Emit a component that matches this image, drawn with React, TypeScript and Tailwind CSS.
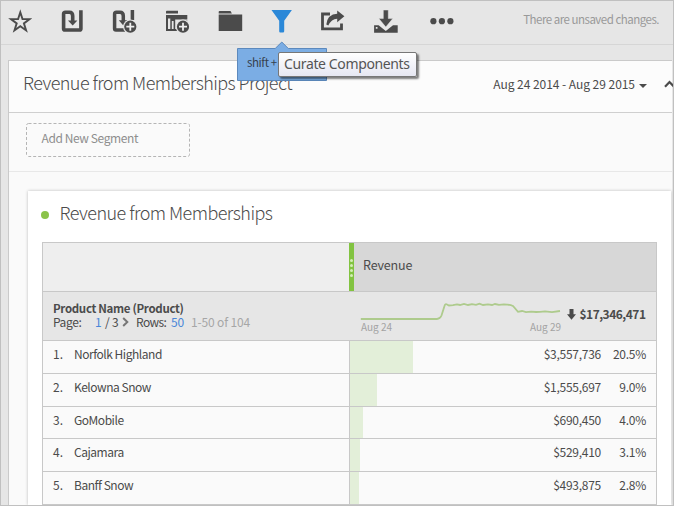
import React from "react";

const INK = "#4b4b4b";

function Star() {
  return (
    <svg width="24" height="24" viewBox="8 9 24 24" className="absolute left-[7px] top-2">
      <path d="M20.3 12.3 L22.5 19.1 H29.6 L23.9 23.4 L26.1 30.4 L20.3 26.2 L14.5 30.4 L16.7 23.4 L11 19.1 H18.1 Z" fill="none" stroke={INK} strokeWidth="1.9" />
    </svg>
  );
}

function SaveIcon() {
  return (
    <svg width="24" height="24" viewBox="61 9 24 24" className="absolute left-[60px] top-2">
      <path d="M80.9 10.2 V28.7 Q80.9 30 79.6 30 H65 Q63.6 30 63.6 28.7 V14 Q63.6 12.2 65.4 12.2 H69.5 Q72.7 12.2 72.7 16 V21" fill="none" stroke={INK} strokeWidth="3.6" />
      <path d="M68 20.5 H77.4 L72.7 25.6 Z" fill={INK} />
    </svg>
  );
}

function PlusBadge({ cx }: { cx: number }) {
  return (
    <g>
      <circle cx={cx} cy="26.7" r="7.2" fill="#e6e6e6" />
      <circle cx={cx} cy="26.7" r="6.1" fill={INK} />
      <path d={`M${cx - 4} 26.7 H${cx + 4} M${cx} 22.7 V30.7`} stroke="#efefef" strokeWidth="1.8" />
    </g>
  );
}

function SaveAsIcon() {
  return (
    <svg width="28" height="26" viewBox="112 9 28 26" className="absolute left-[111px] top-2">
      <path d="M132.4 10 V20 M125 30 H116 Q114.6 30 114.6 28.7 V14 Q114.6 12.2 116.4 12.2 H120 Q123.3 12.2 123.3 16 V21" fill="none" stroke={INK} strokeWidth="3.5" />
      <path d="M118.8 20.3 H127.8 L123.3 25.4 Z" fill={INK} />
      <PlusBadge cx={130.3} />
    </svg>
  );
}

function ReportIcon() {
  return (
    <svg width="28" height="26" viewBox="164 9 28 26" className="absolute left-[163px] top-2">
      <path d="M166 13.6 V11.6 Q166 10.8 166.8 10.8 H178 V13.6 Z" fill={INK} />
      <path fillRule="evenodd" d="M166 15 H187.3 V31 H166 Z M168 18.5 V29 H170.3 V18.5 Z M171.8 21 V29 H173.6 V21 Z M175.2 23.6 V29 H180 V20.5 H187.3 V19.6 H175.2 Z" fill={INK} />
      <PlusBadge cx={183} />
    </svg>
  );
}

function FolderIcon() {
  return (
    <svg width="26" height="24" viewBox="217 9 26 24" className="absolute left-[216px] top-2">
      <path d="M218.7 13.4 V11.8 Q218.7 10.9 219.6 10.9 H230.5 L231.9 13.4 Z M218.7 14.6 H242.2 V31 H218.7 Z" fill={INK} />
    </svg>
  );
}

function FunnelIcon() {
  return (
    <svg width="22" height="25" viewBox="271 9 22 25" className="absolute left-[270px] top-2">
      <path d="M271.5 10 H291.9 L284.2 20.8 V31.2 Q284.2 32.6 283 32.6 H280.3 Q279.2 32.6 279.2 31.2 V20.8 Z" fill="#2b88d8" />
    </svg>
  );
}

function ShareIcon() {
  return (
    <svg width="26" height="24" viewBox="320 9 26 24" className="absolute left-[319px] top-2">
      <path d="M330 14 H322.5 V28.9 H341.5 V23.5" fill="none" stroke={INK} strokeWidth="2.8" />
      <path d="M337.2 10.5 L344.4 16.2 L337.2 22.2 V18.7 Q331.4 18.7 328.3 25.6 L326.3 24.5 Q327.5 14.2 337.2 13.8 Z" fill={INK} />
    </svg>
  );
}

function DownloadIcon() {
  return (
    <svg width="26" height="25" viewBox="373 9 26 25" className="absolute left-[372px] top-2">
      <path d="M374.1 25.2 H378.6 L385.8 31 L393 25.2 H397.7 V32.7 H374.1 Z M375.8 27 V28.7 H377.5 V27 Z" fill={INK} fillRule="evenodd" />
      <path d="M383.3 10 H388.3 V18.6 H392.8 L385.8 27 L378.8 18.6 H383.3 Z" fill={INK} stroke="#e6e6e6" strokeWidth="0.5" />
    </svg>
  );
}

function MoreIcon() {
  return (
    <svg width="26" height="10" viewBox="429 16 26 10" className="absolute left-[428px] top-[15px]">
      <circle cx="433.4" cy="21.2" r="3.1" fill={INK} />
      <circle cx="441.9" cy="21.2" r="3.1" fill={INK} />
      <circle cx="450.4" cy="21.2" r="3.1" fill={INK} />
    </svg>
  );
}

const rows = [
  { n: "1.", name: "Norfolk Highland", value: "$3,557,736", pct: "20.5%", bar: 63, h: 33 },
  { n: "2.", name: "Kelowna Snow", value: "$1,555,697", pct: "9.0%", bar: 27, h: 33 },
  { n: "3.", name: "GoMobile", value: "$690,450", pct: "4.0%", bar: 13, h: 32 },
  { n: "4.", name: "Cajamara", value: "$529,410", pct: "3.1%", bar: 10, h: 33 },
  { n: "5.", name: "Banff Snow", value: "$493,875", pct: "2.8%", bar: 9, h: 33 },
];

export default function App() {
  return (
    <div className="relative flex h-[506px] w-[674px] flex-col overflow-hidden border border-[#c0c0c0] bg-[#e6e6e6] font-['Noto_Sans_CJK_SC','Noto_Sans',sans-serif] text-[12px] text-[#4b4b4b]">
      <header className="relative flex h-11 shrink-0 justify-end border-b border-[#d6d6d6]">
        <Star />
        <SaveIcon />
        <SaveAsIcon />
        <ReportIcon />
        <FolderIcon />
        <FunnelIcon />
        <ShareIcon />
        <DownloadIcon />
        <MoreIcon />
        <span className="mr-[14px] mt-[9px] whitespace-nowrap text-[11.5px] leading-[18px] tracking-[-0.5px] text-[#999]">There are unsaved changes.</span>
      </header>

      <main className="ml-[7px] mr-[1px] mt-[15px] flex min-h-0 flex-1 flex-col border-l border-t border-[#cacaca] bg-[#fafafa]">
        <div className="flex h-[52px] shrink-0 items-start border-b border-[#cfcfcf] bg-[#fcfcfc]">
          <h1 className="ml-[14px] mt-[8px] whitespace-nowrap text-[18px] font-light leading-[26px] tracking-[-0.58px]">Revenue from Memberships Project</h1>
          <div className="-mr-[2px] ml-auto mt-[14px] flex items-start">
            <span className="whitespace-nowrap text-[12px] leading-[18px] tracking-[-0.04px]">Aug 24 2014 - Aug 29 2015</span>
            <svg width="8" height="4" className="ml-1 mt-[9px]"><path d="M0 0 H8 L4 4 Z" fill={INK} /></svg>
            <svg width="10" height="8" className="ml-[17px] mt-[5px]"><path d="M1 6.7 L5.5 2 L10 6.7" stroke={INK} strokeWidth="2.2" fill="none" /></svg>
          </div>
        </div>

        <div className="h-[59px] shrink-0 border-b border-[#e8e8e8] pl-[17px] pt-[10px]">
          <svg width="164" height="34" className="absolute"><rect x="0.5" y="0.5" width="163" height="33" rx="2" fill="none" stroke="#b5b5b5" strokeDasharray="3 2" /></svg>
          <div className="pl-[15.5px] pt-[6px] text-[12px] leading-[18px] tracking-[-0.4px] text-[#8e8e8e]">Add New Segment</div>
        </div>

        <section className="ml-[19px] mr-[1px] mt-[19px] flex min-h-0 flex-1 flex-col bg-white shadow-[0_0_3px_rgba(0,0,0,0.25)]">
          <div className="flex h-[51px] shrink-0 items-start">
            <i className="ml-[13px] mt-[20px] h-2 w-2 rounded-full bg-[#8bc34a]" />
            <h2 className="ml-[10.5px] mt-[8px] whitespace-nowrap text-[18px] font-light leading-[26px] tracking-[-0.55px]">Revenue from Memberships</h2>
          </div>

          <div className="ml-[14px] w-[615px] shrink-0 border-x border-t border-[#c8c8c8]">
            <div className="flex h-[49px] border-b border-[#c8c8c8]">
              <div className="w-[306px] bg-[#eeeeee]" />
              <div className="flex w-[5px] flex-col items-center gap-[2px] bg-[#82c341] pt-[16px]">
                {[0, 1, 2, 3].map((i) => (
                  <i key={i} className="h-[3px] w-[3px] rounded-full bg-[#d3edb4]" />
                ))}
              </div>
              <div className="flex-1 bg-[#d7d7d7] pl-[9px] pt-[13px] text-[12.5px] leading-[18px] tracking-[-0.15px]">Revenue</div>
            </div>

            <div className="flex h-[49px] border-b border-[#c8c8c8] bg-[#e6e6e6]">
              <div className="w-[317px] pl-[10px] pt-[9px]">
                <div className="whitespace-nowrap text-[11.5px] font-bold leading-[14px] tracking-[-0.32px]">Product Name (Product)</div>
                <div className="flex items-start whitespace-nowrap text-[12px] leading-[14px] tracking-[-0.15px]">
                  <span className="w-[42px] tracking-[-0.4px]">Page:</span>
                  <span className="w-[10px] text-[#4a86d8]">1</span>
                  <span className="w-[17px]">/ 3</span>
                  <svg width="7" height="10" className="mt-[2px]"><path d="M1.2 1 L5.3 5 L1.2 9" fill="none" stroke="#777" strokeWidth="2" /></svg>
                  <span className="ml-[7px] w-[35px] tracking-[-0.6px]">Rows:</span>
                  <span className="w-[20px] text-[#4a86d8]">50</span>
                  <span className="text-[#a6a6a6]">1-50 of 104</span>
                </div>
              </div>
              <div className="w-[201px] pt-[9px]">
                <svg width="201" height="20" viewBox="360 301 201 20" className="block">
                  <path d="M360.8 319 H437 Q440 319 441.5 315.5 L444.5 306 Q445.2 303.7 446.5 304.3 L449 305.5 L453 305.2 L457 304.4 L460 305 L464 303.9 L468 305 L472 304.2 L476 304.9 L479.5 303.7 L483 305 L488 304.4 L492 305 L495 304 L499 304.9 L504 304.4 Q510 304.5 513 306 L518 311.8 L522 311 L526 312.2 L531 311.6 L536 312 L540 311.8 L545 311.4 L552 312.2 L560 311" fill="none" stroke="#aecb8d" strokeWidth="1.8" />
                </svg>
                <div className="flex h-4 justify-between pl-[1px] text-[10px] leading-[12px] text-[#a3a3a3]">
                  <span>Aug 24</span>
                  <span>Aug 29</span>
                </div>
              </div>
              <svg width="9" height="11" className="ml-[6px] mt-[17px]"><path d="M2.5 0 H6.5 V5.3 H9 L4.5 10.7 L0 5.3 H2.5 Z" fill={INK} /></svg>
              <div className="ml-auto mr-[10.5px] mt-[13px] text-[12px] font-bold leading-[18px] tracking-[-0.5px]">$17,346,471</div>
            </div>

            {rows.map((r) => (
              <div key={r.n} style={{ height: r.h }} className="flex border-b border-[#c8c8c8] bg-[#fafafa] text-[12px] leading-[18px]">
                <div className="flex w-[307px] border-r border-[#c8c8c8] pl-[10px] pt-[4px]">
                  <span className="w-[21px]">{r.n}</span>
                  <span className="tracking-[-0.47px]">{r.name}</span>
                </div>
                <div className="flex flex-1 pr-[10px] tracking-[-0.27px]">
                  <div style={{ width: r.bar }} className="bg-[#e3efd9]" />
                  <span className="ml-auto pt-[4px]">{r.value}</span>
                  <span className="w-[45px] pt-[4px] text-right">{r.pct}</span>
                </div>
              </div>
            ))}
          </div>
        </section>
      </main>

      <svg width="92" height="42" viewBox="236 41 92 42" className="absolute left-[235px] top-10">
        <path d="M237.5 48.5 H275.2 L281.8 42 L288.3 48.5 H326.5 V80.5 H237.5 Z" fill="#7badE4" stroke="#5c89bd" />
      </svg>
      <span className="absolute left-[246px] top-[52px] whitespace-nowrap text-[11.5px] leading-[18px] tracking-[-0.4px] text-[#36414d]">shift +</span>
      <div className="absolute left-[277px] top-[51px] h-[25px] w-[139px] whitespace-nowrap rounded-[2px] border border-[#777] bg-gradient-to-b from-white to-[#e6e7f2] pl-[5px] font-['Noto_Sans','Noto_Sans_CJK_SC',sans-serif] text-[14px] leading-[22px] tracking-[-0.37px] text-[#555] shadow-[2px_2px_2px_rgba(0,0,0,0.5)]">
        Curate Components
      </div>
    </div>
  );
}
